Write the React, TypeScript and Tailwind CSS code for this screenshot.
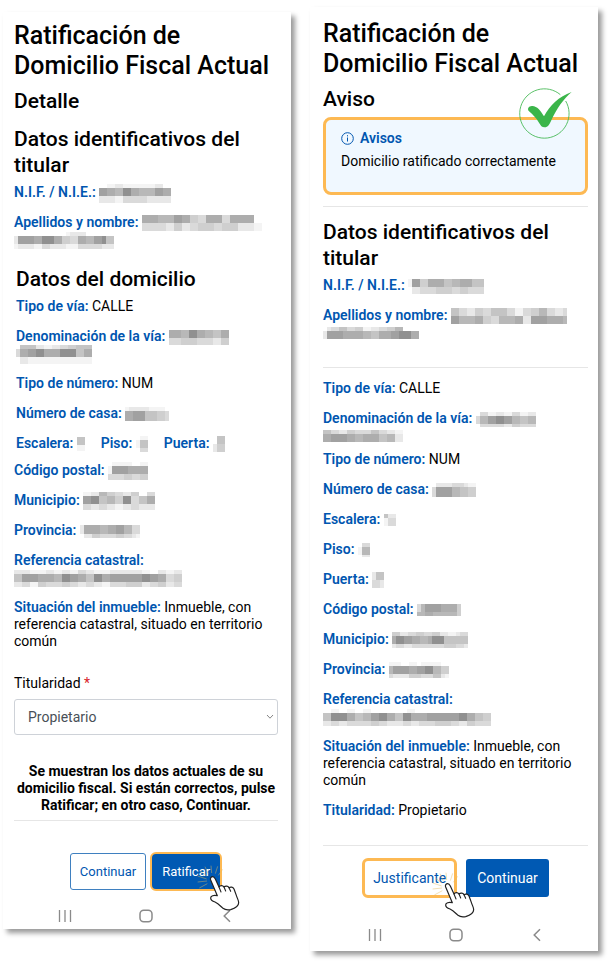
import {ReactNode, useId, useState} from "react";

type MosaicRow = [number, string];

// Grey levels of the hidden values, "0" is an empty cell
const greys = ["none", "#f4f4f4", "#e8e8e8", "#dadada", "#cfcfcf", "#c4c4c4", "#b8b8b8", "#adadad", "#a1a1a1", "#909090"];

const masks: Record<string, Array<MosaicRow>> = {
    nifA: [[4, "001122111111112200"], [8, "887766997766668877"], [7, "222211333333222222"]],
    nameA1: [[8, "777766668877443377773377777700"], [8, "333333224422334444334444222211"]],
    nameA2: [[4, "0000000000000122220000000"], [8, "2888877999774433776688955"], [5, "1222211332222111333333222"]],
    streetA1: [[8, "777669977665577"], [7, "333444433332244"]],
    streetA2: [[4, "0555522112233445555"], [8, "3778899777799995577"], [7, "0221111111111111111"]],
    houseA: [[4, "12222211110"], [10, "77888555443"]],
    stairA: [[8, "55"], [6, "11"]],
    floorA: [[4, "011"], [8, "155"], [4, "033"]],
    doorA: [[8, "055"], [8, "244"]],
    zipA: [[4, "0111110011"], [8, "1888877777"], [6, "3333443344"]],
    cityA: [[4, "112266443322440033"], [8, "889955664499335577"], [6, "332233221122332222"]],
    provinceA: [[9, "277776677886633"], [4, "022443333443321"]],
    cadastreA: [[4, "222211112211221133221111222222221100221122"], [8, "558888777766998877559977888888889988773344"], [5, "223311443333443322332211333344442233442233"]],
    nifB: [[8, "1884477775566777555"], [7, "0223333444433443333"]],
    nameB1: [[8, "55332244335555331133446633223"], [8, "88666677443366667722888877776"]],
    nameB2: [[4, "0233553344112233446600000"], [8, "2888877777665577788999770"]],
    streetB1: [[4, "033112211331122"], [8, "366889988665566"], [3, "033333322443333"]],
    streetB2: [[4, "55332244333355332211"], [8, "77888877667777556622"]],
    houseB: [[4, "02222333211"], [10, "38888665544"]],
    stairB: [[4, "522"], [8, "133"]],
    floorB: [[4, "033"], [8, "166"], [2, "022"]],
    doorB: [[8, "255"], [8, "332"]],
    zipB: [[8, "36888877774"], [4, "66776666664"]],
    cityB: [[4, "4422334433442211233"], [8, "7998877667999555555"], [4, "2332233333333444332"]],
    provinceB: [[4, "111001101111100"], [8, "688887788996644"], [4, "322224443335521"]],
    cadastreB: [[4, "001100110011000000000110000000000000000000"], [8, "559999775566889977559977778888888899775544"], [5, "223322333333443322223322333344443322443333"]],
};

const Mosaic = ({name}: { name: string }): JSX.Element => {
    const rows = masks[name];
    const cols = Math.max(...rows.map(([, cells]) => cells.length));
    const height = rows.reduce((sum, [h]) => sum + h, 0);
    let y = 0;

    return (
        <svg
            aria-hidden="true"
            width={cols * 4}
            height={height}
            shapeRendering="crispEdges"
            className="-my-1 inline-block align-middle"
        >
            {rows.map(([h, cells], row) => {
                const top = y;
                y += h;
                return cells.split("").map((cell, col) => (
                    <rect key={`${row}-${col}`} x={col * 4} y={top} width={4} height={h} fill={greys[Number(cell)]}/>
                ));
            })}
        </svg>
    );
};

const Field = ({label, children}: { label: string, children: ReactNode }): JSX.Element => (
    <p>
        <span className="font-semibold text-[#0056b0]">{label}:</span> {children}
    </p>
);

const Fields = ({className, children}: { className: string, children: ReactNode }): JSX.Element => (
    <div className={`flex flex-col gap-[13px] ${className}`}>{children}</div>
);

const NavBar = (): JSX.Element => (
    <div className="flex items-center justify-center gap-[67px] text-[#8a8a8a]">
        <svg width="14" height="14" viewBox="0 0 14 14" fill="none" stroke="currentColor" strokeWidth="1.3">
            <path d="M1.5 1v12M7 1v12M12.5 1v12"/>
        </svg>
        <svg width="14" height="14" viewBox="0 0 14 14" fill="none" stroke="currentColor" strokeWidth="1.5">
            <rect x="1" y="1.2" width="12" height="11.6" rx="3.8"/>
        </svg>
        <svg width="14" height="14" viewBox="0 0 14 14" fill="none" stroke="currentColor" strokeWidth="1.5">
            <path d="M10 1.2 4.2 7 10 12.8"/>
        </svg>
    </div>
);

const Hand = (): JSX.Element => (
    <svg
        aria-hidden="true"
        viewBox="156 70 144 144"
        className="pointer-events-none absolute -right-5 -bottom-5 size-12"
    >
        <path
            d="M189 81l9 21M207 78l2 22M227 80l-7 22M242 89l-13 18M175 94l20 15M167 109l27 9M167 127l28-3M172 145l24-13"
            fill="none" stroke="#e5b95c" strokeWidth="2" opacity="0.7"
        />
        <path
            d="M206 121c-2-6 1-10 6-10 4 0 6 3 8 7l11 24c3-5 11-6 15 0 4-4 12-4 15 2 5-3 12-2 15 4l7 19c3 10 7 15 7 22 0 11-12 17-24 21-10 2-17 1-23-4-8-7-13-14-24-19-9-3-13-7-13-12 0-7 9-9 20-7z"
            fill="#fff" stroke="#222" strokeWidth="3.6" strokeLinejoin="round"
        />
        <path d="M231 142l6 15M246 142l5 12M261 144l5 11" fill="none" stroke="#222" strokeWidth="3.2" strokeLinecap="round"/>
    </svg>
);

const CheckMark = (): JSX.Element => (
    <svg
        aria-hidden="true"
        viewBox="28 36 162 156"
        className="absolute -top-[33px] right-3 h-[52px] w-[54px]"
    >
        <path d="M152 59A74 74 0 1 0 168 78" fill="none" stroke="#3bb54a" strokeWidth="2.5"/>
        <path
            d="M186 51c-25 22-44 48-62 87-5 11-9 19-19 19-9 0-11-5-17-14-9-15-18-23-30-34-7-8 0-17 10-16 15 1 24 13 35 31 18-33 44-59 83-73z"
            fill="#3bb54a"
        />
    </svg>
);

const Detail = (): JSX.Element => {
    const ownershipId = useId();
    const [ownership, setOwnership] = useState<string>("Propietario");

    return (
        <section className="flex-1 bg-white pt-[9px] pr-[13px] pb-[6px] pl-[11px] shadow-[4px_4px_5px_rgba(0,0,0,0.4)]">
            <h1 className="text-[25px] leading-[30px] font-medium">Ratificación de Domicilio Fiscal Actual</h1>
            <h2 className="mt-[7px] text-[21px] leading-[26px] font-medium">Detalle</h2>
            <h3 className="mt-3 text-[21px] leading-[26px] font-medium">Datos identificativos del titular</h3>
            <Fields className="mt-[6px]">
                <Field label="N.I.F. / N.I.E."><Mosaic name="nifA"/></Field>
                <Field label="Apellidos y nombre"><Mosaic name="nameA1"/><br/><Mosaic name="nameA2"/></Field>
            </Fields>

            <div className="pl-[2px]">
                <h3 className="mt-[18px] text-[21px] leading-[26px] font-medium">Datos del domicilio</h3>
                <Fields className="mt-[6px]">
                    <Field label="Tipo de vía">CALLE</Field>
                    <Field label="Denominación de la vía"><Mosaic name="streetA1"/><br/><Mosaic name="streetA2"/></Field>
                    <Field label="Tipo de número">NUM</Field>
                    <Field label="Número de casa"><Mosaic name="houseA"/></Field>
                    <div className="flex gap-4">
                        <Field label="Escalera"><Mosaic name="stairA"/></Field>
                        <Field label="Piso"><Mosaic name="floorA"/></Field>
                        <Field label="Puerta"><Mosaic name="doorA"/></Field>
                    </div>
                </Fields>
            </div>

            <Fields className="mt-[10px]">
                <Field label="Código postal"><Mosaic name="zipA"/></Field>
                <Field label="Municipio"><Mosaic name="cityA"/></Field>
                <Field label="Provincia"><Mosaic name="provinceA"/></Field>
                <Field label="Referencia catastral"><br/><Mosaic name="cadastreA"/></Field>
                <Field label="Situación del inmueble">
                    Inmueble, con referencia catastral, situado en territorio común
                </Field>
            </Fields>

            <label htmlFor={ownershipId} className="mt-[25px] block">
                Titularidad <span className="text-[#d8232a]">*</span>
            </label>
            <div className="relative mt-[7px]">
                <select
                    id={ownershipId}
                    value={ownership}
                    onChange={(event) => setOwnership(event.target.value)}
                    className="block h-9 w-full appearance-none rounded-[3px] border border-[#ced2d8] bg-white pl-[13px] text-[#495057]"
                >
                    <option>Propietario</option>
                    <option>Usufructuario</option>
                </select>
                <svg
                    aria-hidden="true"
                    viewBox="0 0 8 8"
                    className="pointer-events-none absolute top-[14px] right-1 size-2"
                >
                    <path d="M1 2l3 3.2L7 2" fill="none" stroke="#777" strokeWidth="0.9"/>
                </svg>
            </div>

            <p className="mt-7 text-center font-bold">
                Se muestran los datos actuales de su domicilio fiscal. Si están correctos, pulse Ratificar; en otro caso,
                Continuar.
            </p>
            <hr className="mt-[6px] border-[#e6e6e6]"/>
            <div className="mt-[31px] mb-[18px] flex items-center justify-center gap-1 text-[13px]">
                <button type="button" className="h-[37px] rounded-[3px] border border-[#3f80c0] px-[9px] text-[#0056b0]">
                    Continuar
                </button>
                <div className="relative">
                    <button
                        type="button"
                        className="h-[39px] rounded-md border-2 border-[#fdb953] bg-[#0059b3] px-[10px] text-white"
                    >
                        Ratificar
                    </button>
                    <Hand/>
                </div>
            </div>
            <NavBar/>
        </section>
    );
};

const Notice = (): JSX.Element => (
    <section className="flex-1 bg-white pt-3 pr-[10px] pb-[9px] pl-[13px] shadow-[4px_4px_5px_rgba(0,0,0,0.4)]">
        <h1 className="text-[25px] leading-[30px] font-medium">Ratificación de Domicilio Fiscal Actual</h1>
        <h2 className="mt-[7px] text-[21px] leading-[26px] font-medium">Aviso</h2>
        <div className="relative mt-[5px] h-[78px] rounded-lg border-3 border-[#fdb953] bg-[#f0f8ff] pt-[10px] pl-[15px]">
            <p className="flex items-center gap-[6px] font-semibold text-[#0056b0]">
                <svg aria-hidden="true" width="13" height="13" viewBox="0 0 13 13" fill="none" stroke="currentColor">
                    <circle cx="6.5" cy="6.5" r="5.8"/>
                    <path d="M6.5 5.5v4M6.5 3.2v1.2"/>
                </svg>
                Avisos
            </p>
            <p className="mt-[6px]">Domicilio ratificado correctamente</p>
            <CheckMark/>
        </div>
        <hr className="mt-[11px] border-[#e6e6e6]"/>

        <h3 className="mt-3 text-[21px] leading-[26px] font-medium">Datos identificativos del titular</h3>
        <Fields className="mt-[6px]">
            <Field label="N.I.F. / N.I.E."><Mosaic name="nifB"/></Field>
            <Field label="Apellidos y nombre"><Mosaic name="nameB1"/><br/><Mosaic name="nameB2"/></Field>
        </Fields>
        <hr className="mt-[26px] border-[#e6e6e6]"/>

        <Fields className="mt-3">
            <Field label="Tipo de vía">CALLE</Field>
            <Field label="Denominación de la vía"><Mosaic name="streetB1"/><br/><Mosaic name="streetB2"/></Field>
        </Fields>
        <Fields className="mt-[7px]">
            <Field label="Tipo de número">NUM</Field>
            <Field label="Número de casa"><Mosaic name="houseB"/></Field>
            <Field label="Escalera"><Mosaic name="stairB"/></Field>
            <Field label="Piso"><Mosaic name="floorB"/></Field>
            <Field label="Puerta"><Mosaic name="doorB"/></Field>
            <Field label="Código postal"><Mosaic name="zipB"/></Field>
            <Field label="Municipio"><Mosaic name="cityB"/></Field>
            <Field label="Provincia"><Mosaic name="provinceB"/></Field>
            <Field label="Referencia catastral"><br/><Mosaic name="cadastreB"/></Field>
            <Field label="Situación del inmueble">
                Inmueble, con referencia catastral, situado en territorio común
            </Field>
            <Field label="Titularidad">Propietario</Field>
        </Fields>
        <hr className="mt-[26px] border-[#e6e6e6]"/>

        <div className="mt-3 mb-[30px] flex items-center justify-center gap-[9px]">
            <div className="relative">
                <button type="button" className="h-10 rounded-md border-3 border-[#fdb953] bg-white px-2 text-[#0056b0]">
                    Justificante
                </button>
                <Hand/>
            </div>
            <button type="button" className="h-[38px] rounded-[3px] bg-[#0059b3] px-[11px] text-white">
                Continuar
            </button>
        </div>
        <NavBar/>
    </section>
);

const App = (): JSX.Element => (
    <main className="flex min-h-screen items-start gap-[19px] bg-white pt-[7px] pr-3 pb-3 pl-[3px] font-['Roboto','Liberation_Sans',sans-serif] text-[14px] leading-[17px] text-black">
        <div className="flex flex-1 pt-[5px]">
            <Detail/>
        </div>
        <div className="flex flex-1">
            <Notice/>
        </div>
    </main>
);

export default App;
